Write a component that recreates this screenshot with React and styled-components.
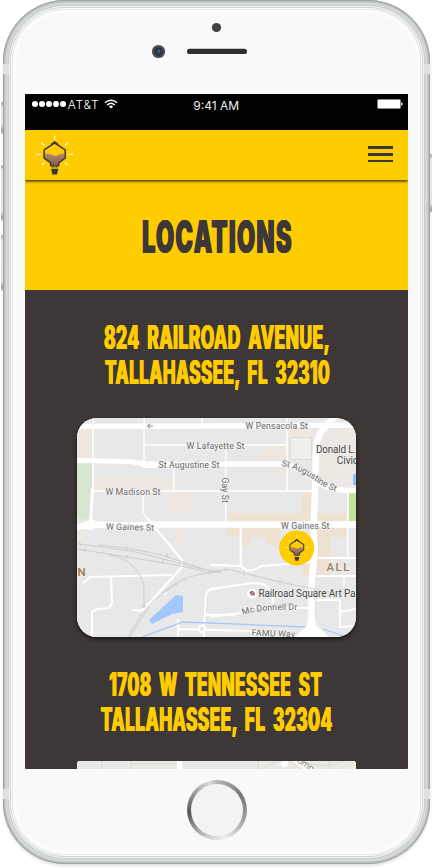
import React from "react";
import styled, { createGlobalStyle } from "styled-components";

const YELLOW = "#ffcc00";
const DARK = "#3e3737";

const GlobalStyle = createGlobalStyle`
  *, *::before, *::after { box-sizing: border-box; }
  body { margin: 0; background: #fff; font-family: Roboto, "Liberation Sans", sans-serif; }
  svg { display: block; }
`;

const Stage = styled.div`
  position: relative;
  width: 432px;
  height: 868px;
  overflow: hidden;
  background: #fff;
`;

const Phone = styled.div`
  position: relative;
  width: 427px;
  height: 864px;
  margin-left: 3px;
  padding: 0 22px;
  border-radius: 62px;
  background: #f9f9f9;
  box-shadow:
    inset 0 0 0 1px #a2a7a9,
    inset 0 0 0 2px #b9bdbe,
    inset 0 0 0 3px #cbcecf,
    inset 0 0 0 5px #d5d8d8,
    inset 0 0 0 6px #c9cccc,
    inset 0 0 0 7px #f4f4f4,
    inset 0 0 0 8px #d3d5d5,
    inset 0 0 0 9px #fafafa,
    inset 0 0 0 10px #e6e6e6,
    inset 0 0 4px 12px #fff,
    0 2px 3px rgba(0, 0, 0, 0.12);
`;

const SideKey = styled.div`
  position: absolute;
  ${(p) => (p.$right ? "right: 0;" : "left: 1px;")}
  top: ${(p) => p.$top}px;
  width: 4px;
  height: ${(p) => p.$height}px;
  border-radius: 2px;
  background: linear-gradient(#8d9194, #eceeee 5px, #e9ebeb calc(100% - 9px), #a2a6a8 calc(100% - 4px), #c9cccd);
`;

const AntennaBand = styled.div`
  position: absolute;
  top: ${(p) => p.$top}px;
  ${(p) => (p.$right ? "right: 0;" : "left: 0;")}
  width: 6px;
  height: 10px;
  background: #e0e2e2;
`;

const TopBezel = styled.div`
  display: flex;
  height: 94px;
`;

const Screen = styled.main`
  width: 383px;
  height: 675px;
  overflow: hidden;
  border-radius: 1px;
  background: ${DARK};
`;

const StatusBar = styled.div`
  display: grid;
  grid-template-columns: 1fr auto 1fr;
  align-items: start;
  height: 36px;
  padding: 0 5px 0 6.5px;
  background: #000;
  color: #fff;
  font-family: Inter, sans-serif;
  font-weight: 300;
`;

const Carrier = styled.div`
  display: flex;
  align-items: center;
  height: 20px;
  font-size: 12px;
  letter-spacing: 0.7px;
`;

const Dots = styled.div`
  display: flex;
  gap: 1.2px;
  margin-right: 1.5px;
`;

const Dot = styled.i`
  width: 6px;
  height: 6px;
  border-radius: 50%;
  background: #fff;
`;

const WifiIcon = styled.svg`
  margin-left: 5px;
`;

const Clock = styled.div`
  height: 24px;
  margin-right: 2px;
  font-size: 12px;
  line-height: 24px;
  font-weight: 400;
  color: #eee;
`;

const BatterySlot = styled.div`
  display: flex;
  justify-content: flex-end;
  padding-top: 5px;
`;

const AppBar = styled.header`
  position: relative;
  z-index: 1;
  display: flex;
  align-items: flex-start;
  justify-content: space-between;
  height: 50px;
  padding: 4px 15px 0 10px;
  background: ${YELLOW};
  box-shadow: 0 1px 3px rgba(0, 0, 0, 0.95);
`;

const MenuButton = styled.button`
  display: flex;
  flex-direction: column;
  gap: 4px;
  margin: 12.4px 0 0;
  padding: 0;
  border: 0;
  background: none;
`;

const MenuBar = styled.span`
  width: 25px;
  height: 2.7px;
  background: ${DARK};
`;

const Hero = styled.section`
  display: flex;
  justify-content: center;
  height: 110px;
  padding-top: 27px;
  background: ${YELLOW};
  color: ${DARK};
`;

const Title = styled.h1`
  margin: 0;
  font: 900 45px/60px Inter, sans-serif;
  white-space: nowrap;
  letter-spacing: 2.4px;
  text-shadow: 0.7px 0 currentColor, -0.7px 0 currentColor;
  transform: translateX(0.5px) scaleX(${(p) => p.$squeeze});
`;

const Location = styled.section`
  display: flex;
  flex-direction: column;
  align-items: center;
`;

const Address = styled.h2`
  display: flex;
  flex-direction: column;
  align-items: center;
  margin: 0;
  padding-top: 30px;
  padding-bottom: ${(p) => p.$after}px;
  color: ${YELLOW};
`;

const AddressLine = styled.span`
  font: 800 32px/35px Inter, sans-serif;
  white-space: nowrap;
  letter-spacing: 0.8px;
  word-spacing: 6px;
  text-shadow: 0.8px 0 currentColor, -0.8px 0 currentColor;
  transform: translateX(${(p) => p.$shift || 0}px) scaleX(${(p) => p.$squeeze});
`;

const MapCard = styled.div`
  width: 279px;
  height: 219px;
  overflow: hidden;
  border-radius: ${(p) => p.$radius}px;
  background: #e8e8e8;
  box-shadow: 0 2px 4px rgba(0, 0, 0, ${(p) => p.$shade});
`;

const BottomBezel = styled.div`
  display: flex;
  justify-content: center;
  padding: 11px 0 0 1px;
`;

const HomeButton = styled.div`
  width: 60px;
  height: 60px;
  padding: 4px;
  border-radius: 50%;
  background: conic-gradient(#b5b5b5, #858585 45deg, #777 60deg, #999 100deg, #c4c4c4 135deg, #eee 165deg, #ccc 200deg, #999 230deg, #555 265deg, #777 285deg, #aaa 315deg, #ddd 345deg, #b5b5b5);
`;

const HomeFace = styled.div`
  height: 100%;
  border-radius: 50%;
  background: #f2f3f5;
`;

function Balloon({ id, ...rest }) {
  return (
    <svg viewBox="45 133 117 125" {...rest}>
      <defs>
        <linearGradient id={id} x1="0" y1="0" x2="0" y2="1">
          <stop offset="0" stopColor="#bd8a69" />
          <stop offset="1" stopColor="#755749" />
        </linearGradient>
      </defs>
      <path d="M75 194C86 186 94 196 104 198C114 200 120 188 133 192V206L115 220V232H93V220L75 206Z" fill={`url(#${id})`} />
      <path d="M92 229V219L72.500 205V180L104 159L135.500 180V205L116 219V229" fill="none" stroke={DARK} strokeWidth="4.600" />
      <path d="M104 153.500L115 162V168L104 161.500L93 168V162Z" fill={DARK} />
      <path d="M99 224V233M109 224V233" stroke={DARK} strokeWidth="2.500" />
      <path d="M93 237H115L111 254H97Z" fill={DARK} />
      <path d="M104 136V149M135 167L144 158M73 167L64 158M145 193H159M49 193H62M135 218L143 226M73 218L65 226" stroke="#fff" strokeWidth="3.200" />
    </svg>
  );
}

const beige = [
  [0, 11, 15, 29], [17, 60, 79, 12], [89, 74, 27, 19], [184, 28, 26, 14], [192, 50, 16, 10],
  [210, 10, 28, 34], [0, 110, 7, 14], [98, 112, 9, 14],
];
const sand = [
  [150, 95, 85, 8], [225, 75, 9, 28], [241, 95, 29, 8], [149, 110, 14, 8], [165, 110, 38, 9],
  [165, 110, 7, 18], [189, 110, 13, 17], [226, 145, 8, 13], [240, 119, 13, 38], [240, 110, 30, 9],
];

function DistrictMap() {
  return (
    <svg width="279" height="219" viewBox="0 0 279 219" fontFamily="Roboto, sans-serif">
      <rect width="279" height="219" fill="#e8e8e8" />
      {beige.map(([x, y, w, h]) => <rect key={`${x}-${y}`} x={x} y={y} width={w} height={h} fill="#ede7df" />)}
      {sand.map(([x, y, w, h]) => <rect key={`${x}-${y}`} x={x} y={y} width={w} height={h} fill="#eee1cf" />)}
      <path d="M243 20L260 3H279V72L262 68L241 57Z" fill="#ede8e1" />
      <path d="M0 45H15V98L10 102L0 100Z" fill="#d8e6cf" />
      <rect x="272" y="75" width="7" height="28" fill="#c0e49b" />
      <rect x="276" y="56" width="3" height="11" fill="#8fc1ff" />
      <rect x="213.5" y="19.5" width="21" height="22" fill="#eeeeec" stroke="#dcdad7" />
      <path d="M72 202L99 177L106 178V194L95 196L75 206Z" fill="#a1c9fb" />

      <g fill="none" stroke="#fff" strokeLinejoin="round">
        <path strokeWidth="1.4" d="M16 0V73M67 0V45M125 0V7M67 27H210M210 0V73M148.700 27V107M16 73H236M96.700 46V73M66 73V95L75 105M270.700 75V140M0 131" />
        <path strokeWidth="2.2" d="M163.700 108V149M133 147L164 148L170 152.500H175L185 148L236 144M133 171L176 165L186 166L196 174V185M133 199L163 195L178 189L233 190" />
        <path strokeWidth="1.8" d="M240 140H279M240 158H279M267 158V169M240 182H263V209L279 208M263 194L279 191M141 147H150" />
        <path strokeWidth="2.2" d="M70 100L105 142V149L68 190L63 193L55 192M90 175L85 176L73 189M6 165L13 159L95 157M34 159L35 185L32 190L20 191L15 194V219" />
        <path strokeWidth="1.8" d="M101 201V219M101 211L175 213M127 219V205L129 176L132 172L143 170M127 197H158" />
        <circle cx="125" cy="211" r="3.2" fill="#e8e8e8" strokeWidth="2" />
        <path strokeWidth="3" d="M15.500 70L13.500 106M60 44L67 48.500H80" />
        <path strokeWidth="5.200" d="M0 8.300L120 8.200L190 7.500L279 7.200M0 42.500L53 43.500L70 46H208C220 48 231 56 240 64C250 71 264 73 279 72.500" />
        <path strokeWidth="6.500" d="M0 109L16 106.500L50 107.500L90 106.500L279 106.500M260 -4C247 11 239 15 239 34L238 75L236.500 110L237.500 135L234 171L234.500 206" />
      </g>
      <path d="M5 105L15 101L25 107L14 112L4 110ZM231 201H238L239 207L252 219H218L229 209Z" fill="#fff" />
      <path d="M65 219L106 204L133 205L228 209M246 211L270 219" fill="none" stroke="#a9c8fa" strokeWidth="1.300" />
      <g fill="none" stroke="#cdcdcd" strokeWidth="1">
        <path d="M1 126L55 133L121 150L143 154M22 127L50 130L85 137L123 150M0 131L50 139L100 147L128 153.500M34 137C52 141 63 152 67 168V190M51 219C63 195 80 177 98 166C112 158 124 155 143 154M53 219C65 197 82 176 101 165M128 154.500L150 151L203 164L262 176" />
        <path d="M3 124V128M8 129.500V134M50 129V134M55 131V135M50 137V141M34 135V139M86 142V146M90 135V140M121 148V152M124 149V153M98 164L100 168M107 160L109 164M132 153V157M143 152V156M149 149V154M167 153V158M178 156V160M203 162V167M64 188H69M62 196L65 198" />
      </g>
      <path d="M70 8H76M73 6L70.500 8L73 10" fill="none" stroke="#8c9bca" strokeWidth="1.100" />

      <g fontSize="8.8" fill="#6e6e6e" stroke="#f1f1f1" strokeWidth="1.6" paintOrder="stroke" strokeLinejoin="round">
        <text x="168.500" y="11" textLength="62.500">W Pensacola St</text>
        <text x="109.500" y="30.600" textLength="58">W Lafayette St</text>
        <text x="81.500" y="49.600" textLength="61">St Augustine St</text>
        <text x="28.500" y="76.500" textLength="55">W Madison St</text>
        <text x="29" y="111.500" textLength="48" transform="rotate(1.500 29 111)">W Gaines St</text>
        <text x="204" y="110.800" textLength="48.500">W Gaines St</text>
        <text transform="translate(145 59.500) rotate(90)" textLength="25.500">Gay St</text>
        <path id="augustine" d="M204.500 48C215 49 227 55 237 62Q248 70 260 74" fill="none" stroke="none" />
        <text><textPath href="#augustine">St Augustine St</textPath></text>
        <path id="donnell" d="M166 197Q182 191 222 192" fill="none" stroke="none" />
        <text><textPath href="#donnell">Mc Donnell Dr</textPath></text>
        <text x="174.500" y="217.500" textLength="43.500" transform="rotate(2 174 217)">FAMU Way</text>
      </g>
      <g fontSize="10" fill="#454545" stroke="#f0eeec" strokeWidth="1.500" paintOrder="stroke">
        <text x="239" y="34.800" textLength="40">Donald L.</text>
        <text x="259.800" y="45.600">Civic</text>
        <circle cx="175" cy="175.700" r="5" fill="#fff" stroke="none" />
        <text x="181.500" y="179" textLength="97">Railroad Square Art Pa</text>
      </g>
      <path d="M172.500 175Q173 172.500 176 173.300Q178.500 174.500 177.500 178L175.700 176.600L174.500 178Z" fill="#80635b" />
      <path d="M173.500 176L176.500 174.500" stroke="#fff" strokeWidth="0.600" />
      <g fill="#9c7f5e" stroke="#f0ece5" strokeWidth="1.500" paintOrder="stroke">
        <text x="0.500" y="158" fontSize="11.500" fontWeight="600">N</text>
        <text x="249.500" y="153" fontSize="11.500" fontWeight="500" letterSpacing="1.400">ALL</text>
      </g>
      <circle cx="219.700" cy="130" r="17.500" fill={YELLOW} />
      <Balloon id="pin-fill" x="207" y="116" width="25.500" height="28" />
    </svg>
  );
}

function TennesseeMap() {
  return (
    <svg width="279" height="219" viewBox="0 0 279 219" fontFamily="Roboto, sans-serif">
      <rect width="279" height="219" fill="#e9e9e8" />
      <path d="M25 0V30M54 0V30M54 2.500H100M181 0V30M180 10L201 0M213 0L230 12M226 0C235 5 255 7 266 0M252 0V30" fill="none" stroke="#dcd8d2" />
      <path d="M102.500 0V30" stroke="#fff" strokeWidth="5" />
      <path d="M203 2L208 0H211V4L206 7Z" fill="#fff" />
      <path d="M274 0H279V30H274Z" fill="#f1ebdd" />
      <path d="M216 -3L238 13" stroke="#fff" strokeWidth="6" />
      <text transform="translate(219.500 1) rotate(33)" fontSize="9" fill="#8a8579">omp</text>
    </svg>
  );
}

export default function App() {
  return (
    <>
      <GlobalStyle />
      <Stage>
        <SideKey $top={102} $height={32} />
        <SideKey $top={165} $height={56} />
        <SideKey $top={235} $height={56} />
        <SideKey $right $top={154} $height={59} />
        <Phone>
          <AntennaBand $top={64} />
          <AntennaBand $top={64} $right />
          <AntennaBand $top={789} />
          <AntennaBand $top={789} $right />
          <TopBezel>
            <svg width="383" height="94" viewBox="25 0 383 94">
              <circle cx="216.500" cy="27.500" r="4.600" fill="#424242" />
              <rect x="187" y="48.800" width="60" height="5.200" rx="2.600" fill="#303030" />
              <circle cx="158.500" cy="51.500" r="6.600" fill="#4c4c4e" />
              <circle cx="158.500" cy="51.500" r="4.300" fill="#303238" />
              <circle cx="158.700" cy="51.700" r="2.500" fill="#22446f" />
              <circle cx="159" cy="51" r="1" fill="#4a72a8" />
            </svg>
          </TopBezel>
          <Screen>
            <StatusBar>
              <Carrier>
                <Dots><Dot /><Dot /><Dot /><Dot /><Dot /></Dots>
                AT&amp;T
                <WifiIcon width="14" height="10" viewBox="0 0 14 10">
                  <path d="M1 3.700C4.500 0.300 9.500 0.300 13 3.700M3.200 6C5.500 3.900 8.500 3.900 10.800 6" fill="none" stroke="#fff" strokeWidth="1.500" />
                  <path d="M7 9.500L4.900 7.400Q7 5.800 9.100 7.400Z" fill="#fff" />
                </WifiIcon>
              </Carrier>
              <Clock>9:41 AM</Clock>
              <BatterySlot>
                <svg width="26" height="10" viewBox="0 0 26 10">
                  <rect x="0.500" y="0.500" width="23" height="9" rx="1" fill="#fff" stroke="#8c8c8c" />
                  <path d="M24.200 3.300Q25.700 3.500 25.700 5T24.200 6.700Z" fill="#fff" />
                </svg>
              </BatterySlot>
            </StatusBar>
            <AppBar>
              <Balloon id="logo-fill" width="39" height="42" />
              <MenuButton aria-label="Menu"><MenuBar /><MenuBar /><MenuBar /></MenuButton>
            </AppBar>
            <Hero><Title $squeeze={0.524}>LOCATIONS</Title></Hero>
            <Location>
              <Address $after={28}>
                <AddressLine $squeeze={0.545} $shift={0.5}>824 RAILROAD AVENUE,</AddressLine>
                <AddressLine $squeeze={0.534} $shift={0.8}>TALLAHASSEE, FL 32310</AddressLine>
              </Address>
              <MapCard $radius={20} $shade={0.65}><DistrictMap /></MapCard>
            </Location>
            <Location>
              <Address $after={24}>
                <AddressLine $squeeze={0.536} $shift={-1}>1708 W TENNESSEE ST</AddressLine>
                <AddressLine $squeeze={0.54}>TALLAHASSEE, FL 32304</AddressLine>
              </Address>
              <MapCard $radius={3} $shade={0}><TennesseeMap /></MapCard>
            </Location>
          </Screen>
          <BottomBezel>
            <HomeButton><HomeFace /></HomeButton>
          </BottomBezel>
        </Phone>
      </Stage>
    </>
  );
}
